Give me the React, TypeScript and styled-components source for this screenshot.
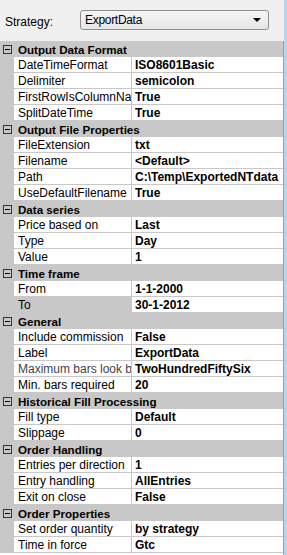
import React from "react";
import styled, { createGlobalStyle } from "styled-components";

const GlobalStyle = createGlobalStyle`
  html, body {
    margin: 0;
    padding: 0;
    background: #f0f0f0;
  }
  body {
    font-family: "Liberation Sans", Arial, sans-serif;
    font-size: 12px;
    color: #000;
  }
`;

const Frame = styled.div`
  display: flex;
  width: 287px;
  height: 555px;
  overflow: hidden;
`;

const Main = styled.div`
  flex: 1;
  display: flex;
  flex-direction: column;
  min-width: 0;
`;

const BlueEdge = styled.div`
  width: 3px;
  background: #bcd3ec;
`;

const Toolbar = styled.div`
  height: 41px;
  display: flex;
  align-items: center;
  padding: 0 0 2px 5px;
  box-sizing: border-box;
  background: #f0f0f0;
`;

const StrategyLabel = styled.span`
  width: 75px;
  font-size: 12px;
  padding-top: 4px;
  color: #000;
`;

const Combo = styled.div`
  width: 189px;
  height: 20px;
  box-sizing: border-box;
  border: 1px solid #8f8f8f;
  border-radius: 3px;
  background: linear-gradient(#f5f5f5, #e6e6e6);
  display: flex;
  align-items: center;
  justify-content: space-between;
  padding: 0 7px 0 4px;
  font-size: 12px;
  letter-spacing: -0.3px;
`;

const ComboArrow = styled.span`
  width: 0;
  height: 0;
  border-left: 4px solid transparent;
  border-right: 4px solid transparent;
  border-top: 4px solid #000;
  margin-top: 1px;
`;

const Grid = styled.div`
  flex: 1;
  background: #fff;
  border-right: 1px solid #a0a0a0;
  display: flex;
  flex-direction: column;
`;

const CategoryRow = styled.div`
  height: 16px;
  background: #c8c8c8;
  display: flex;
  align-items: center;
  font-weight: bold;
  font-size: 11.6px;
  white-space: nowrap;
`;

const Toggle = styled.span`
  position: relative;
  width: 7px;
  height: 7px;
  border: 1px solid #333;
  margin: 0 6px 0 3px;
  flex: none;
  &:after {
    content: "";
    position: absolute;
    left: 1px;
    right: 1px;
    top: 3px;
    height: 1px;
    background: #000;
  }
`;

const PropRow = styled.div`
  height: 16px;
  display: flex;
  white-space: nowrap;
  line-height: 14px;
`;

const Gutter = styled.div`
  width: 14px;
  flex: none;
  background: #c8c8c8;
`;

const NameCell = styled.div<{ $selected?: boolean; $dim?: boolean }>`
  width: 118px;
  flex: none;
  box-sizing: border-box;
  padding: 1px 0 0 4px;
  overflow: hidden;
  border-bottom: 1px solid #c8c8c8;
  border-right: 1px solid #c8c8c8;
  background: ${({ $selected }) => ($selected ? "#c8c8c8" : "#fff")};
  color: ${({ $dim }) => ($dim ? "#444" : "#000")};
`;

const ValueCell = styled.div`
  flex: 1;
  min-width: 0;
  box-sizing: border-box;
  padding: 1px 0 0 3px;
  overflow: hidden;
  font-weight: bold;
  border-bottom: 1px solid #c8c8c8;
`;

type Prop = [string, string];
type Category = { title: string; props: Prop[] };

const data: Category[] = [
  {
    title: "Output Data Format",
    props: [
      ["DateTimeFormat", "ISO8601Basic"],
      ["Delimiter", "semicolon"],
      ["FirstRowIsColumnName", "True"],
      ["SplitDateTime", "True"],
    ],
  },
  {
    title: "Output File Properties",
    props: [
      ["FileExtension", "txt"],
      ["Filename", "<Default>"],
      ["Path", "C:\\Temp\\ExportedNTdata"],
      ["UseDefaultFilename", "True"],
    ],
  },
  {
    title: "Data series",
    props: [
      ["Price based on", "Last"],
      ["Type", "Day"],
      ["Value", "1"],
    ],
  },
  {
    title: "Time frame",
    props: [
      ["From", "1-1-2000"],
      ["To", "30-1-2012"],
    ],
  },
  {
    title: "General",
    props: [
      ["Include commission", "False"],
      ["Label", "ExportData"],
      ["Maximum bars look back", "TwoHundredFiftySix"],
      ["Min. bars required", "20"],
    ],
  },
  {
    title: "Historical Fill Processing",
    props: [
      ["Fill type", "Default"],
      ["Slippage", "0"],
    ],
  },
  {
    title: "Order Handling",
    props: [
      ["Entries per direction", "1"],
      ["Entry handling", "AllEntries"],
      ["Exit on close", "False"],
    ],
  },
  {
    title: "Order Properties",
    props: [
      ["Set order quantity", "by strategy"],
      ["Time in force", "Gtc"],
    ],
  },
];

export default function App() {
  return (
    <>
      <GlobalStyle />
      <Frame>
        <Main>
          <Toolbar>
            <StrategyLabel>Strategy:</StrategyLabel>
            <Combo>
              <span>ExportData</span>
              <ComboArrow />
            </Combo>
          </Toolbar>
          <Grid>
            {data.map((cat) => (
              <React.Fragment key={cat.title}>
                <CategoryRow>
                  <Toggle />
                  {cat.title}
                </CategoryRow>
                {cat.props.map(([name, value]) => (
                  <PropRow key={name}>
                    <Gutter />
                    <NameCell
                      $selected={name === "To"}
                      $dim={name === "Maximum bars look back"}
                    >
                      {name}
                    </NameCell>
                    <ValueCell>{value}</ValueCell>
                  </PropRow>
                ))}
              </React.Fragment>
            ))}
          </Grid>
        </Main>
        <BlueEdge />
      </Frame>
    </>
  );
}
